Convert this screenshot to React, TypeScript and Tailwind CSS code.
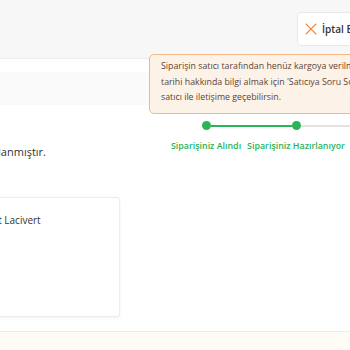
import { X } from "lucide-react";

const steps = [
  { title: "Siparişiniz Alındı", left: "bg-transparent", right: "bg-[#2bb35a]", done: true },
  { title: "Siparişiniz Hazırlanıyor", left: "bg-[#2bb35a]", right: "bg-[#e3e3e3]", done: true },
  { title: "Kargoya Verildi", left: "bg-[#e3e3e3]", right: "bg-transparent", done: false },
];

export default function App() {
  return (
    <main className="relative w-[350px] h-[350px] overflow-hidden bg-white font-['Open_Sans',sans-serif] text-[#333]">
      {/* Header */}
      <header className="h-[59px] bg-[#f7f7f7] border-b border-[#ececec] flex justify-end items-start pt-[12px]">
        <button className="h-[34px] w-[90px] -mr-[37px] flex items-center gap-[1px] pl-[3px] bg-white border border-[#e8e8e8] rounded-[4px] shrink-0">
          <X className="h-[20px] w-[20px] text-[#f5873a]" strokeWidth={1.3} />
          <span className="text-[10px] font-semibold whitespace-nowrap">İptal Et</span>
        </button>
      </header>

      <div className="h-[13px]" />
      <div className="h-[33px] bg-[#fafafa]" />

      {/* Info + stepper */}
      <section className="h-[60px] flex">
        <div className="w-[161px] pt-[39px] text-[11px] whitespace-nowrap flex justify-end">
          <p className="mr-[115px]">Ürününüz kargoya hazırlanmıştır.</p>
        </div>
        <div className="flex pt-[16px]">
          {steps.map((s) => (
            <div key={s.title} className="w-[90px] flex flex-col items-center shrink-0">
              <div className="w-full flex items-center">
                <div className={`flex-1 h-[2px] ${s.left}`} />
                <div className={`w-[9px] h-[9px] rounded-full ${s.done ? "bg-[#2bb35a]" : "bg-[#e3e3e3]"}`} />
                <div className={`flex-1 h-[2px] ${s.right}`} />
              </div>
              <span className="mt-[9px] text-[8.9px] font-semibold text-[#2bb35a] whitespace-nowrap">
                {s.title}
              </span>
            </div>
          ))}
        </div>
      </section>

      {/* Product card */}
      <div className="mt-[32px] -ml-[40px] w-[160px] h-[120px] bg-white border border-[#ececec] rounded-[3px] shadow-[0_1px_3px_rgba(0,0,0,0.06)] pt-[15px] pl-[14px]">
        <p className="text-[10px] whitespace-nowrap">Renkt Lacivert</p>
      </div>

      <div className="mt-[14px] border-t border-[#ececec] h-[40px] bg-[#fffcf8]" />

      {/* Warning tooltip */}
      <div className="absolute left-[149px] top-[54px] w-[240px] h-[60px] bg-[#fdf2e8] border border-[#f5b685] rounded-[5px] pl-[11px] pt-[4px] text-[8.8px] leading-[15.5px] text-[#5c4434]">
        <p className="whitespace-nowrap">Siparişin satıcı tarafından henüz kargoya verilmedi. Kargoya teslim</p>
        <p className="whitespace-nowrap">tarihi hakkında bilgi almak için 'Satıcıya Soru Sor' butonu ile</p>
        <p className="whitespace-nowrap">satıcı ile iletişime geçebilirsin.</p>
      </div>
    </main>
  );
}
